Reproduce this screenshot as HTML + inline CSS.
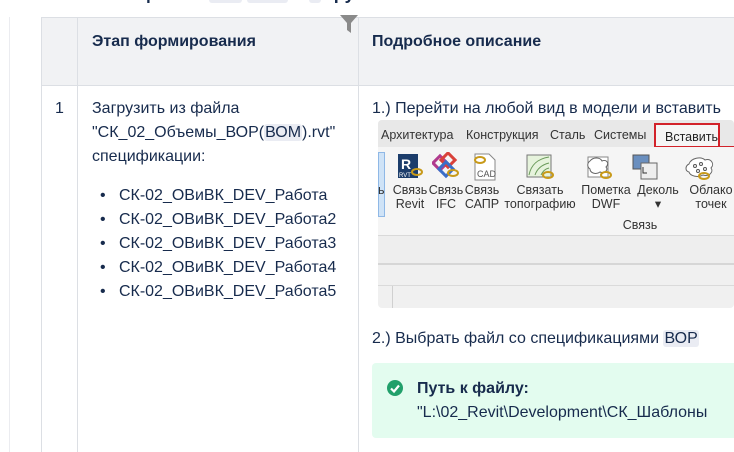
<!DOCTYPE html>
<html><head><meta charset="utf-8"><style>
*{margin:0;padding:0;box-sizing:border-box}
body{width:734px;height:452px;overflow:hidden;background:#fff;font-family:"Liberation Sans",sans-serif;color:#172b4d;position:relative}
.a{position:absolute}
.t{font-size:16px;line-height:24px;white-space:nowrap}
.code{background:#eaecf3;border-radius:3px;padding:0 1px}
.rb{font-size:12.5px;color:#333;text-align:center;line-height:14px;white-space:nowrap}
</style></head><body>
<div class="a" style="left:0;top:0;width:734px;height:5px;overflow:hidden">
 <div style="margin-top:-17px;font-weight:bold;font-size:18px;color:#172b4d;padding-left:40px;white-space:nowrap">Ссылки на файлы <span class="code" style="padding:0 14px">&nbsp;</span> <span class="code" style="padding:0 18px">&nbsp;</span> и <span class="code">&nbsp;&nbsp;</span> группами</div>
</div>
<div class="a" style="left:41px;top:17px;width:693px;height:69px;background:#f1f2f4;border-top:1px solid #dcdfe4;border-bottom:1px solid #dcdfe4"></div>
<div class="a" style="left:9px;top:17px;width:1px;height:435px;background:#ebecf0"></div>
<div class="a" style="left:41px;top:17px;width:1px;height:435px;background:#dcdfe4"></div>
<div class="a" style="left:77px;top:17px;width:1px;height:435px;background:#dcdfe4"></div>
<div class="a" style="left:358px;top:17px;width:1px;height:435px;background:#dcdfe4"></div>
<svg class="a" style="left:339px;top:14px" width="20" height="20" viewBox="0 0 20 20"><path d="M1 1h18l-7 8v10l-4-3V9z" fill="#8a8a8a"/></svg>
<div class="a t" style="left:92px;top:30px;font-weight:bold">Этап формирования</div>
<div class="a t" style="left:372px;top:30px;font-weight:bold">Подробное описание</div>
<div class="a t" style="left:55px;top:97px">1</div>
<div class="a t" style="left:92px;top:97px">Загрузить из файла<br>"СК_02_Объемы_ВОР(<span class="code">ВОМ</span>).rvt"<br>спецификации:</div>
<div class="a t" style="left:100px;top:184px">
<div>•&nbsp;&nbsp;&nbsp;СК-02_ОВиВК_DEV_Работа</div>
<div>•&nbsp;&nbsp;&nbsp;СК-02_ОВиВК_DEV_Работа2</div>
<div>•&nbsp;&nbsp;&nbsp;СК-02_ОВиВК_DEV_Работа3</div>
<div>•&nbsp;&nbsp;&nbsp;СК-02_ОВиВК_DEV_Работа4</div>
<div>•&nbsp;&nbsp;&nbsp;СК-02_ОВиВК_DEV_Работа5</div>
</div>
<div class="a t" style="left:372px;top:97px">1.) Перейти на любой вид в модели и вставить</div>
<div class="a" style="left:378px;top:120px;width:356px;height:188px;background:#f0f0f0;border-radius:4px;overflow:hidden">
 <div class="a" style="left:0;top:0;width:356px;height:27px;background:#e8e8e8;font-size:12.5px;color:#333;white-space:nowrap">
  <span class="a" style="left:3px;top:8px">Архитектура</span>
  <span class="a" style="left:88px;top:8px">Конструкция</span>
  <span class="a" style="left:172px;top:8px">Сталь</span>
  <span class="a" style="left:216px;top:8px">Системы</span>
 </div>
 <div class="a" style="left:276px;top:3px;width:66px;height:25px;border:2px solid #d2222a;background:#f5f5f5;font-size:12.5px;color:#222;padding:5px 0 0 9px">Вставить</div>
 <div class="a" style="left:341px;top:26px;width:20px;height:2px;background:#d2222a"></div>
 <div class="a" style="left:0;top:27px;width:356px;height:89px;background:#f5f5f5;border-bottom:1px solid #d9d9d9"></div>
 <div class="a" style="left:0;top:32px;width:7px;height:65px;background:#cfe3f7;border:1px solid #8fb8e6"></div>
 <div class="a" style="left:0;top:116px;width:356px;height:29px;background:#eeeeee;border-bottom:2px solid #d6d6d6"></div>
 <div class="a" style="left:0;top:165px;width:356px;height:1px;background:#dadada"></div>
 <div class="a" style="left:14px;top:166px;width:1px;height:22px;background:#d0d0d0"></div>
 <svg class="a" style="left:19px;top:32px" width="26" height="28"><rect x="1" y="2" width="20" height="24" fill="#1c3d6b"/><text x="4" y="17" font-size="14" fill="#fff" font-family="Liberation Sans" font-weight="bold">R</text><text x="2" y="25" font-size="6" fill="#fff" font-family="Liberation Sans">RVT</text><ellipse cx="20" cy="20" rx="5" ry="3" fill="none" stroke="#c89a1a" stroke-width="2"/></svg>
 <svg class="a" style="left:54px;top:32px" width="28" height="28"><rect x="3" y="6" width="10" height="10" transform="rotate(45 8 11)" fill="none" stroke="#b03a8e" stroke-width="3"/><rect x="11" y="3" width="10" height="10" transform="rotate(45 16 8)" fill="none" stroke="#d9413a" stroke-width="3"/><rect x="9" y="12" width="10" height="10" transform="rotate(45 14 17)" fill="none" stroke="#3a6ec9" stroke-width="3"/><ellipse cx="21" cy="21" rx="5" ry="3" fill="none" stroke="#c89a1a" stroke-width="2"/></svg>
 <svg class="a" style="left:92px;top:32px" width="28" height="30"><path d="M5 2h14l6 6v20H5z" fill="#fff" stroke="#888"/><text x="7" y="25" font-size="9" fill="#555" font-family="Liberation Sans">CAD</text><ellipse cx="10" cy="8" rx="5" ry="3" fill="none" stroke="#c89a1a" stroke-width="2"/></svg>
 <svg class="a" style="left:147px;top:33px" width="30" height="28"><rect x="2" y="2" width="24" height="22" fill="#e6f3dc" stroke="#777"/><path d="M4 22C6 12 12 6 24 4M10 22C12 16 16 12 24 10M16 22c2-4 4-6 8-7" stroke="#6a9a5a" fill="none"/><ellipse cx="23" cy="22" rx="5" ry="3" fill="none" stroke="#c89a1a" stroke-width="2"/></svg>
 <svg class="a" style="left:206px;top:33px" width="34" height="30"><path d="M4 4h20v20H4z" fill="#fff" stroke="#888"/><path d="M6 8c3-4 10-4 12 0 4-2 8 2 4 6 3 3-2 7-6 5-4 3-10 1-10-3-3-2-3-6 0-8z" fill="#fff" stroke="#666"/><ellipse cx="22" cy="22" rx="5" ry="3" fill="none" stroke="#c89a1a" stroke-width="2"/></svg>
 <svg class="a" style="left:253px;top:33px" width="32" height="30"><rect x="2" y="2" width="16" height="14" fill="#6a8fbf" stroke="#555"/><path d="M10 10h16v16H10z" fill="#eee" stroke="#666"/><path d="M12 14v6h4" stroke="#333" fill="none"/></svg>
 <svg class="a" style="left:305px;top:34px" width="34" height="28"><path d="M6 10c2-6 12-8 16-4 6-2 10 4 6 8 3 4-2 9-8 7-5 3-13 1-14-3-4-1-4-6 0-8z" fill="#fff" stroke="#666"/><circle cx="12" cy="12" r="1.5" fill="none" stroke="#555"/><circle cx="18" cy="10" r="1.5" fill="none" stroke="#555"/><circle cx="22" cy="15" r="1.5" fill="none" stroke="#555"/><circle cx="15" cy="17" r="1.5" fill="none" stroke="#555"/><ellipse cx="21" cy="22" rx="5" ry="3" fill="none" stroke="#c89a1a" stroke-width="2"/></svg>
 <div class="a rb" style="left:0;top:63px;width:6px;overflow:hidden">ь</div>
 <div class="a rb" style="left:13px;top:63px;width:38px">Связь<br>Revit</div>
 <div class="a rb" style="left:49px;top:63px;width:38px">Связь<br>IFC</div>
 <div class="a rb" style="left:84px;top:63px;width:40px">Связь<br>САПР</div>
 <div class="a rb" style="left:124px;top:63px;width:76px">Связать<br>топографию</div>
 <div class="a rb" style="left:198px;top:63px;width:60px">Пометка<br>DWF</div>
 <div class="a rb" style="left:254px;top:63px;width:52px">Деколь<br>▾</div>
 <div class="a rb" style="left:310px;top:63px;width:46px">Облако<br>точек</div>
 <div class="a rb" style="left:232px;top:98px;width:60px">Связь</div>
</div>
<div class="a t" style="left:372px;top:327px">2.) Выбрать файл со спецификациями <span class="code">ВОР</span></div>
<div class="a" style="left:372px;top:363px;width:370px;height:75px;background:#e3fcef;border-radius:4px"></div>
<svg class="a" style="left:386px;top:379px" width="18" height="18" viewBox="0 0 18 18"><circle cx="9" cy="9" r="8" fill="#22a06b"/><path d="M5 9.5l3 3 5-6" stroke="#fff" stroke-width="2.2" fill="none"/></svg>
<div class="a t" style="left:417px;top:377px;font-weight:bold">Путь к файлу:</div>
<div class="a t" style="left:417px;top:401px">"L:\02_Revit\Development\СК_Шаблоны</div>
</body></html>
